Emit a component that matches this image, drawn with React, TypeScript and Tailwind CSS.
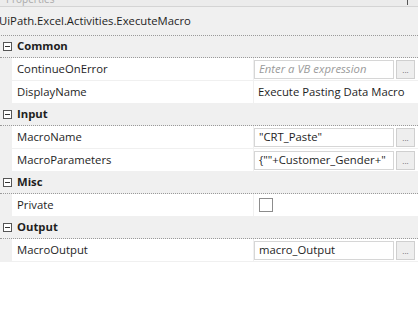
import React from "react";

type Row = { name: string; value?: string; kind: "input" | "text" | "check"; placeholder?: boolean };
type Section = { title: string; rows: Row[] };

const sections: Section[] = [
  {
    title: "Common",
    rows: [
      { name: "ContinueOnError", value: "Enter a VB expression", kind: "input", placeholder: true },
      { name: "DisplayName", value: "Execute Pasting Data Macro", kind: "text" },
    ],
  },
  {
    title: "Input",
    rows: [
      { name: "MacroName", value: "\"CRT_Paste\"", kind: "input" },
      { name: "MacroParameters", value: "{\"\"+Customer_Gender+\"", kind: "input" },
    ],
  },
  { title: "Misc", rows: [{ name: "Private", kind: "check" }] },
  { title: "Output", rows: [{ name: "MacroOutput", value: "macro_Output", kind: "input" }] },
];

const Minus = () => (
  <span className="w-[9px] h-[9px] border border-[#555] flex items-center justify-center bg-white">
    <span className="w-[5px] h-px bg-[#333]" />
  </span>
);

export default function App() {
  return (
    <div className="w-[418px] h-[313px] bg-white text-[11.3px] text-[#1e1e1e] overflow-hidden" style={{ fontFamily: '"Open Sans", "Noto Sans", sans-serif' }}>
      {/* panel title, cut off at the top */}
      <div className="h-[7px] bg-[#ececec] border-b border-[#d4d4d4] relative overflow-hidden">
        <span className="absolute left-[6px] -top-[8px] text-[10px] text-[#aaa]">Properties</span>
        <span className="absolute right-[10px] top-0 w-px h-[5px] bg-[#555]" />
      </div>
      <div className="h-[29px] bg-[#f0f0f0] flex items-center -ml-[1px] border-b border-dotted border-[#9a9a9a]">
        UiPath.Excel.Activities.ExecuteMacro
      </div>
      {sections.map((s) => (
        <div key={s.title}>
          <div className="h-[22px] bg-[#f0f0f0] flex items-center gap-[5px] pl-[3px] font-bold border-b border-dotted border-[#9a9a9a]">
            <Minus />
            <span>{s.title}</span>
          </div>
          <div className="pl-[12px] bg-[#f0f0f0]">
            {s.rows.map((r) => (
              <div key={r.name} className="h-[23px] flex bg-white border-b border-[#f0f0f0]">
                <div className="w-[242px] pl-[5px] flex items-center border-r border-[#f0f0f0]">{r.name}</div>
                <div className="flex-1 flex items-center gap-[2px]">
                  {r.kind === "input" && (
                    <>
                      <div className={`w-[140px] h-[19px] border border-[#d6d6d6] flex items-center pl-[4px] whitespace-nowrap overflow-hidden ${r.placeholder ? "italic text-[#9a9a9a]" : ""}`}>
                        {r.value}
                      </div>
                      <div className="w-[19px] h-[19px] border border-[#cfcfcf] bg-[#eeeeee] flex items-end justify-center pb-[4px] text-[8px] text-[#666] leading-none">...</div>
                    </>
                  )}
                  {r.kind === "text" && <div className="pl-[4px] whitespace-nowrap">{r.value}</div>}
                  {r.kind === "check" && <div className="ml-[5px] w-[14px] h-[14px] border border-[#8c8c8c] bg-white" />}
                </div>
              </div>
            ))}
          </div>
        </div>
      ))}
    </div>
  );
}
